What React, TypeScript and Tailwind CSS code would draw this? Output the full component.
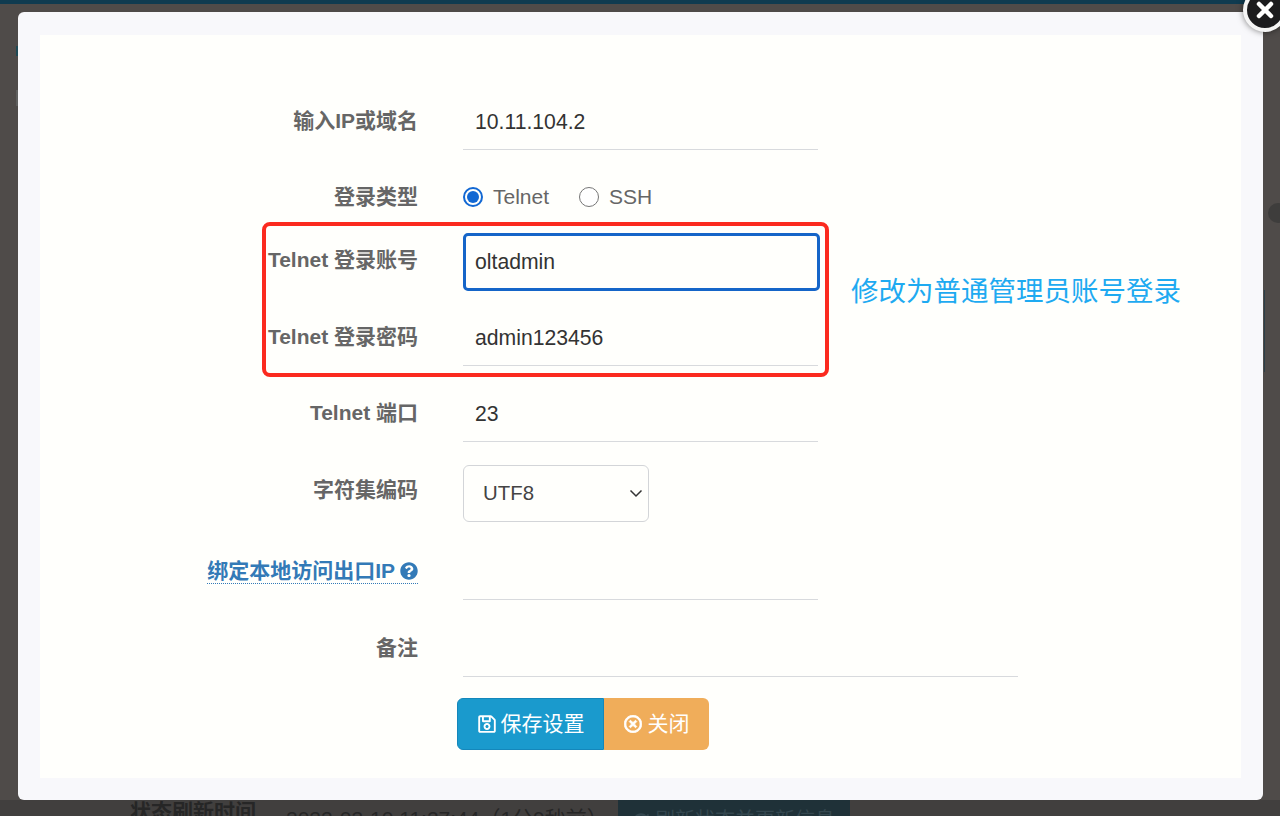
import { FaQuestionCircle, FaRedoAlt, FaRegSave, FaRegTimesCircle } from "react-icons/fa";

const font = "font-['Liberation_Sans','Noto_Sans_CJK_SC',sans-serif]";

function Row({ label, height, children }: { label: React.ReactNode; height: string; children: React.ReactNode }) {
  return (
    <div className={`flex ${height}`}>
      <div className="w-[378px] shrink-0 pt-[13px] text-right text-[21px] leading-[30px] font-bold text-[#666666]">
        {label}
      </div>
      <div className="ml-[45px] flex-1">{children}</div>
    </div>
  );
}

function Field({ value, wide }: { value?: string; wide?: boolean }) {
  return (
    <div
      className={`h-[57px] ${wide ? "w-[555px]" : "w-[355px]"} border-b border-[#d8dadd] pt-[14px] pl-[12px] text-[21.2px] leading-[30px] text-[#333333]`}
    >
      {value}
    </div>
  );
}

export default function App() {
  return (
    <div className={`relative h-[816px] w-[1280px] overflow-hidden bg-[#4f4b49] ${font}`}>
      {/* page behind the overlay */}
      <div className="h-[4px] bg-[#0f3b50]" />
      <div className="absolute top-[46px] left-[16px] h-[10px] w-[2px] bg-[#1f4a55]" />
      <div className="absolute top-[90px] left-[16px] h-[16px] w-[2px] bg-[#5f5f5e]" />
      <div className="absolute top-[203px] right-[-8px] h-[20px] w-[20px] rounded-full bg-[#3e3d3c]" />
      <div className="absolute top-[290px] right-[15px] h-[82px] w-px bg-[#2c3f48]" />

      {/* modal */}
      <div className="relative mt-[8px] ml-[18px] h-[788px] w-[1245px] rounded-[6px] bg-[#f8f8fb] px-[22px] pt-[23px]">
        <div className="relative h-[743px] w-[1201px] bg-[#fffffc] pt-[58px]">
          <Row label="输入IP或域名" height="h-[76px]">
            <Field value="10.11.104.2" />
          </Row>
          <Row label="登录类型" height="h-[63px]">
            <div className="flex h-[56px] items-center text-[21px] text-[#666666]">
              <span className="flex h-[20px] w-[20px] items-center justify-center rounded-full border-2 border-[#1268d3]">
                <span className="h-[12px] w-[12px] rounded-full bg-[#1268d3]" />
              </span>
              <span className="ml-[10px]">Telnet</span>
              <span className="ml-[30px] h-[20px] w-[20px] rounded-full border border-[#767676] bg-white" />
              <span className="ml-[10px]">SSH</span>
            </div>
          </Row>
          <Row label="Telnet 登录账号" height="h-[77px]">
            <div className="mt-[1px] h-[58px] w-[357px] rounded-[5px] border-[3px] border-[#1565c8] pt-[11px] pl-[9px] text-[21.2px] leading-[30px] text-[#333333]">
              oltadmin
            </div>
          </Row>
          <Row label="Telnet 登录密码" height="h-[76px]">
            <Field value="admin123456" />
          </Row>
          <Row label="Telnet 端口" height="h-[77px]">
            <Field value="23" />
          </Row>
          <Row label="字符集编码" height="h-[81px]">
            <div className="mt-[3px] flex h-[57px] w-[186px] items-center justify-between rounded-[6px] border border-[#d3d5d8] pr-[5px] pl-[19px] text-[20.4px] text-[#444444]">
              UTF8
              <svg width="14" height="9" viewBox="0 0 14 9" fill="none" stroke="#333333" strokeWidth="1.5">
                <path d="M1.5 1.5L7 7l5.5-5.5" />
              </svg>
            </div>
          </Row>
          <Row
            label={
              <span className="inline-flex items-center gap-[5px] border-b border-dotted border-[#337ab7] leading-[24px] text-[#337ab7]">
                绑定本地访问出口IP
                <FaQuestionCircle className="text-[18px]" />
              </span>
            }
            height="h-[77px]"
          >
            <Field />
          </Row>
          <Row label="备注" height="h-[78px]">
            <Field wide />
          </Row>
          <div className="ml-[417px] flex h-[52px] w-[252px] text-[21px] text-white">
            <div className="flex w-[147px] items-center justify-center gap-[4px] rounded-l-[6px] border border-[#1487bb] bg-[#1a9acd]">
              <FaRegSave className="text-[20px]" />
              保存设置
            </div>
            <div className="flex w-[105px] items-center justify-center gap-[6px] rounded-r-[6px] bg-[#f0ad5a]">
              <FaRegTimesCircle className="text-[18px]" stroke="currentColor" strokeWidth={24} />
              关闭
            </div>
          </div>

          {/* annotation over the form */}
          <div className="absolute top-[187px] left-[222px] h-[155px] w-[567px] rounded-[8px] border-[4px] border-[#fb2a1f]" />
          <div className="absolute top-[239px] left-[811px] text-[27.5px] leading-[36px] text-[#1eaaf1]">
            修改为普通管理员账号登录
          </div>
        </div>
      </div>

      {/* close button of the modal */}
      <div className="absolute top-[-12px] left-[1243px] flex h-[44px] w-[44px] items-center justify-center rounded-full border-[4px] border-[#f5f5f5] bg-[#1c1c1e] shadow-[0_0_6px_rgba(0,0,0,0.5)]">
        <svg width="18" height="18" viewBox="0 0 18 18" stroke="#ffffff" strokeWidth="4.5" strokeLinecap="round">
          <path d="M3 3l12 12M15 3L3 15" />
        </svg>
      </div>

      {/* status row of the page, cut off by the window */}
      <div className="flex h-[16px] overflow-hidden bg-[#413f3e] pl-[130px] text-[#262626]">
        <span className="w-[156px] text-[21px] leading-[24px] font-bold">状态刷新时间</span>
        <span className="w-[332px] text-[21px] leading-[38px]">2022-03-10 11:27:44（1分9秒前）</span>
        <span className="flex h-[16px] w-[232px] items-start justify-center gap-[6px] bg-[#1f3138] text-[20px] leading-[40px] text-[#34474f]">
          <FaRedoAlt className="mt-[13px] text-[16px]" />
          刷新状态并更新信息
        </span>
      </div>
    </div>
  );
}
